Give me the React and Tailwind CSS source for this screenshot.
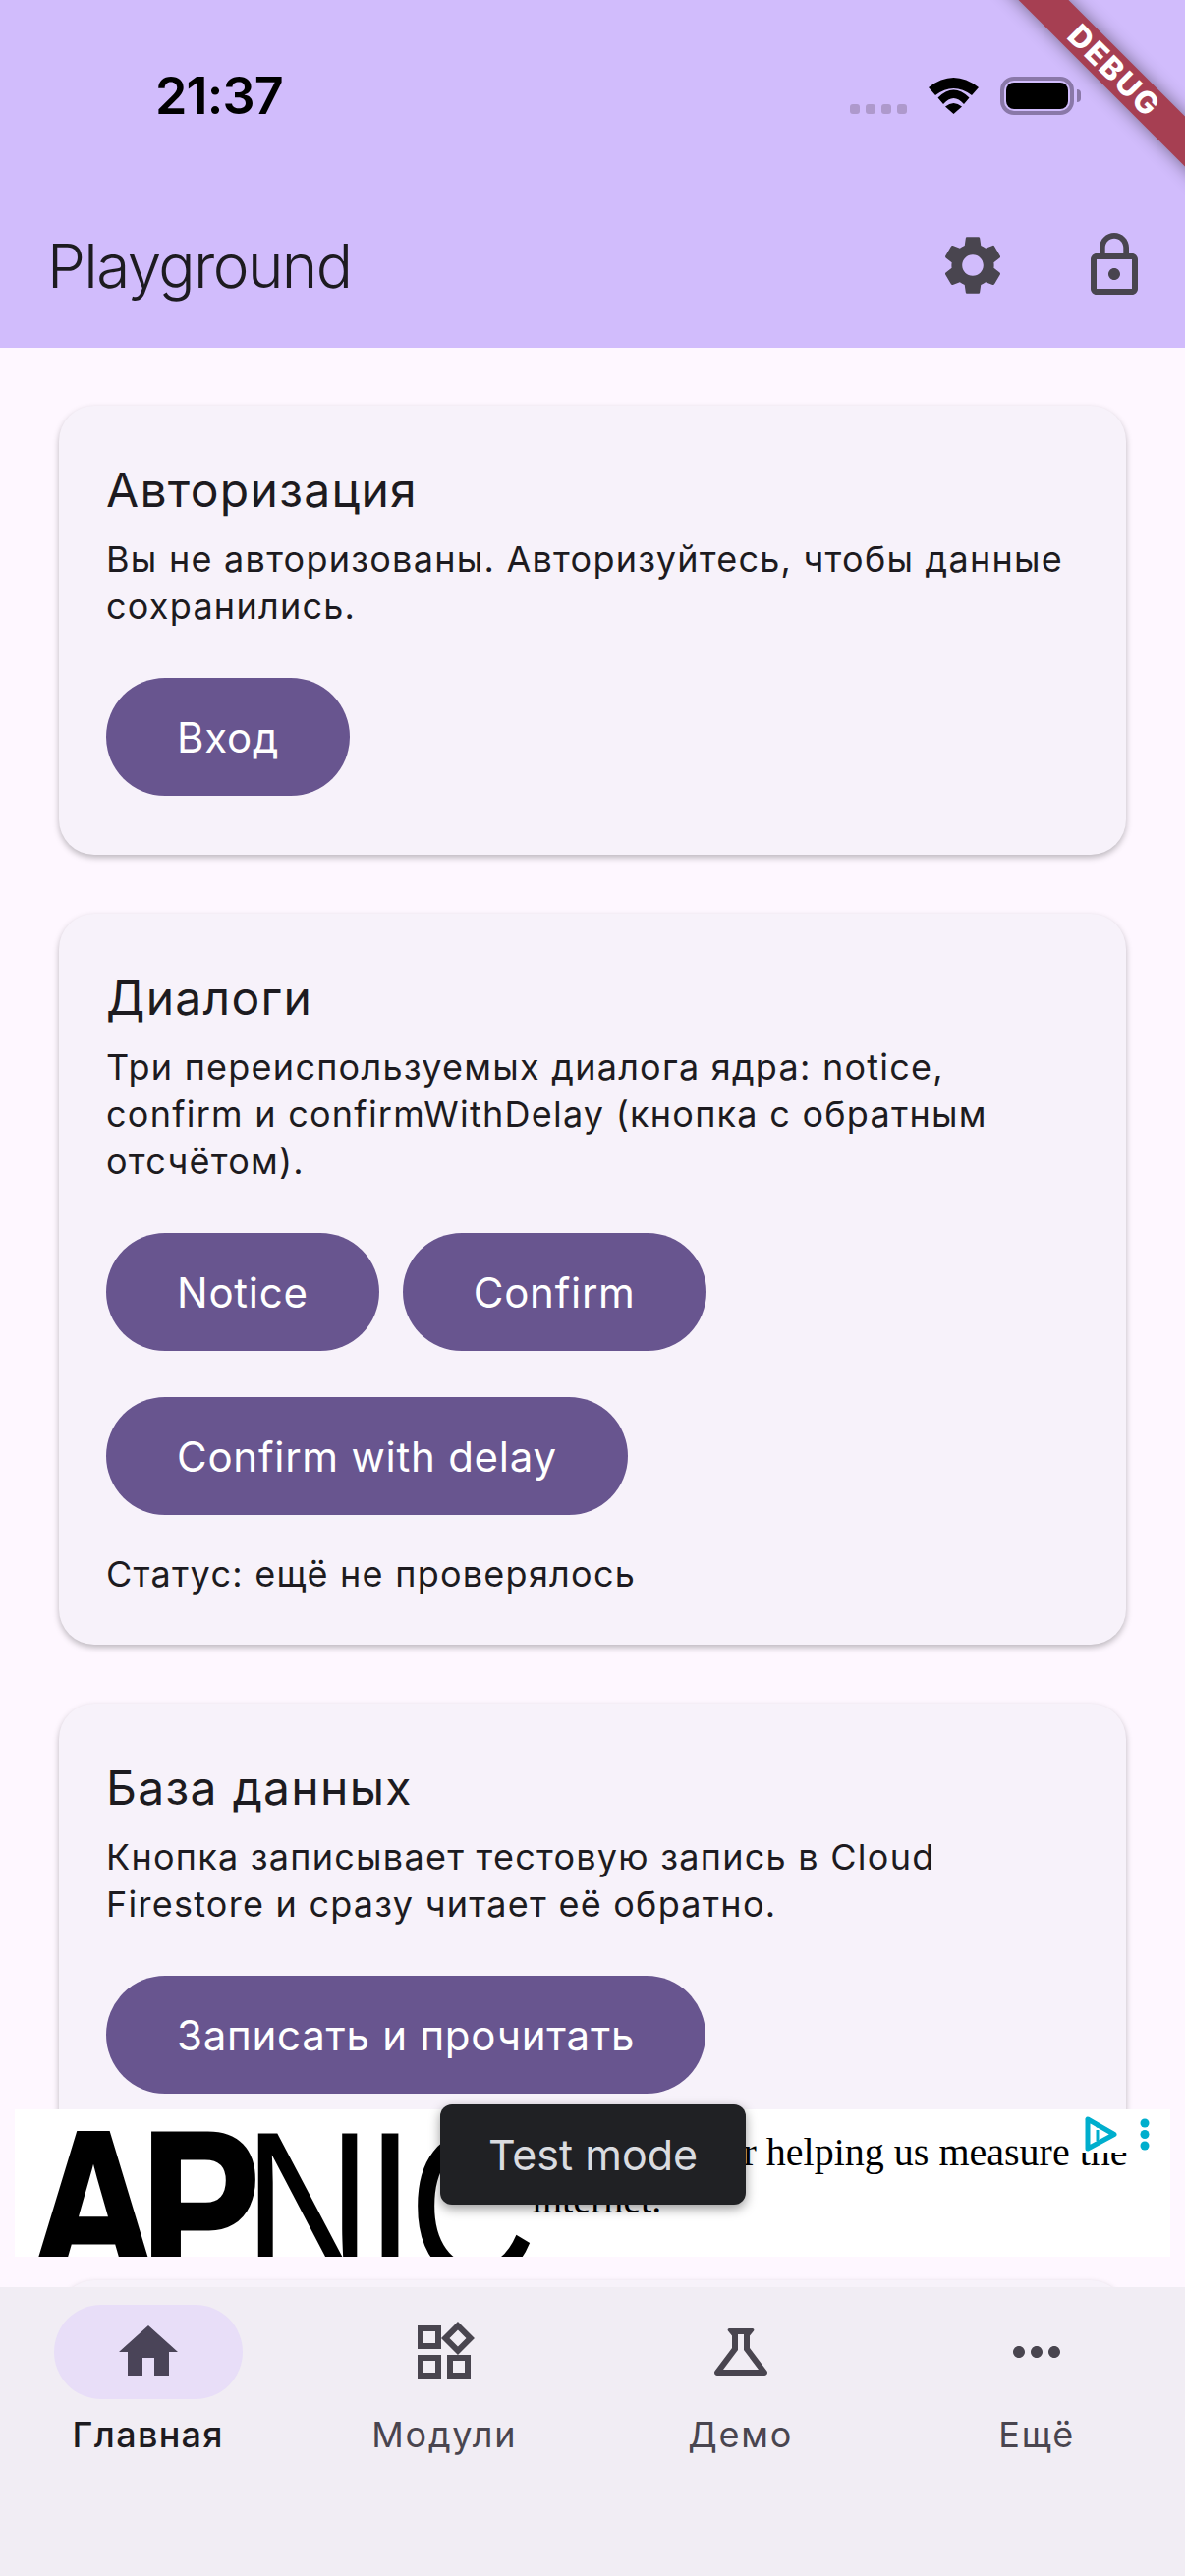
const sans = { fontFamily: 'Inter, "Noto Sans", sans-serif' };

const Icon = ({ d, className = '' }) => (
  <svg viewBox="0 0 24 24" className={`w-[72px] h-[72px] ${className}`} fill="currentColor">
    <path d={d} />
  </svg>
);

const icons = {
  settings:
    'M19.14 12.94c.04-.3.06-.61.06-.94 0-.32-.02-.64-.07-.94l2.03-1.58a.49.49 0 0 0 .12-.61l-1.92-3.32a.488.488 0 0 0-.59-.22l-2.39.96c-.5-.38-1.03-.7-1.62-.94l-.36-2.54a.484.484 0 0 0-.48-.41h-3.84c-.24 0-.43.17-.47.41l-.36 2.54c-.59.24-1.13.57-1.62.94l-2.39-.96c-.22-.08-.47 0-.59.22L2.74 8.87c-.12.21-.08.47.12.61l2.03 1.58c-.05.3-.09.63-.09.94s.02.64.07.94l-2.03 1.58a.49.49 0 0 0-.12.61l1.92 3.32c.12.22.37.29.59.22l2.39-.96c.5.38 1.03.7 1.62.94l.36 2.54c.05.24.24.41.48.41h3.84c.24 0 .44-.17.47-.41l.36-2.54c.59-.24 1.13-.56 1.62-.94l2.39.96c.22.08.47 0 .59-.22l1.92-3.32c.12-.22.07-.47-.12-.61l-2.01-1.58zM12 15.6c-1.98 0-3.6-1.62-3.6-3.6s1.62-3.6 3.6-3.6 3.6 1.62 3.6 3.6-1.62 3.6-3.6 3.6z',
  lock:
    'M12 17c1.1 0 2-.9 2-2s-.9-2-2-2-2 .9-2 2 .9 2 2 2zm6-9h-1V6c0-2.76-2.24-5-5-5S7 3.24 7 6v2H6c-1.1 0-2 .9-2 2v10c0 1.1.9 2 2 2h12c1.1 0 2-.9 2-2V10c0-1.1-.9-2-2-2zM8.9 6c0-1.71 1.39-3.1 3.1-3.1s3.1 1.39 3.1 3.1v2H8.9V6zM18 20H6V10h12v10z',
  home: 'M10 20v-6h4v6h5v-8h3L12 3 2 12h3v8z',
  widgets:
    'M16.66 4.52l2.83 2.83-2.83 2.83-2.83-2.83 2.83-2.83M9 5v4H5V5h4m10 10v4h-4v-4h4M9 15v4H5v-4h4m7.66-13.31L11 7.34 16.66 13l5.66-5.66-5.66-5.65zM11 3H3v8h8V3zm10 10h-8v8h8v-8zm-10 0H3v8h8v-8z',
  science:
    'M13 11.33L18 18H6l5-6.67V6h2M15.96 4H8.04C7.62 4 7.39 4.48 7.65 4.81L9 6.5v4.17L3.2 18.4C2.71 19.06 3.18 20 4 20h16c.82 0 1.29-.94.8-1.6L15 10.67V6.5l1.35-1.69C16.61 4.48 16.38 4 15.96 4z',
  more:
    'M6 10c-1.1 0-2 .9-2 2s.9 2 2 2 2-.9 2-2-.9-2-2-2zm12 0c-1.1 0-2 .9-2 2s.9 2 2 2 2-.9 2-2-.9-2-2-2zm-6 0c-1.1 0-2 .9-2 2s.9 2 2 2 2-.9 2-2-.9-2-2-2z',
};

const StatusBar = () => (
  <div className="h-[186px] pt-[78px] pl-[158px] pr-[106px]">
    <div className="flex items-center justify-between h-[39px]">
      <span className="text-[52px] leading-[39px] font-semibold text-black tracking-[-0.8px]">21:37</span>
      <div className="flex items-center">
        <div className="flex gap-[6px] self-end mb-[1px]">
          {[0, 1, 2, 3].map((i) => (
            <span key={i} className="w-[10px] h-[10px] rounded-[3px] bg-[#AE99CC]" />
          ))}
        </div>
        <svg viewBox="0 0 51 37" className="w-[51px] h-[37px] ml-[22px]" fill="#000">
          <path d="M0 10Q25.5-10 51 10L44 18Q25.5 4 7 18Z" />
          <path d="M9.5 20.5Q25.5 4.5 41.5 20.5L36 27Q25.5 15 15 27Z" />
          <path d="M17 29.5Q25.5 22.5 34 29.5L25.5 37Z" />
        </svg>
        <div className="w-[75px] h-[39px] ml-[22px] border-[4px] border-[#8A78A8] rounded-[14px] p-[2px]">
          <div className="w-full h-full bg-black rounded-[8px]" />
        </div>
        <div className="w-[4px] h-[13px] ml-[3px] bg-[#8A78A8] rounded-r-[4px]" />
      </div>
    </div>
  </div>
);

const Card = ({ title, text, children, className = 'pb-[60px]' }) => (
  <section className={`shrink-0 bg-[#F7F2FA] rounded-[36px] shadow-[0_3px_6px_rgba(0,0,0,0.26)] px-[48px] pt-[50px] ${className}`}>
    <h2 className="text-[48px] leading-[72px] font-normal text-[#1D1B20] tracking-[1.3px]">{title}</h2>
    <p className="mt-[10px] text-[36px] leading-[48px] font-normal text-[#1D1B20] tracking-[1.25px]">{text}</p>
    {children}
  </section>
);

const Btn = ({ children }) => (
  <button className="h-[120px] px-[72px] rounded-full bg-[#68558F] text-white text-[42px] font-normal tracking-[0.75px] whitespace-nowrap">
    {children}
  </button>
);

const NavItem = ({ icon, label, active }) => (
  <div className="flex flex-col items-center">
    <div className={`w-[192px] h-[96px] rounded-full flex items-center justify-center ${active ? 'bg-[#E8DEF8]' : ''}`}>
      <Icon d={icons[icon]} className={active ? 'text-[#4A4458]' : 'text-[#49454F]'} />
    </div>
    <span className={`mt-[12px] text-[36px] leading-[48px] ${active ? 'font-medium tracking-[1.3px] text-[#1D1B20]' : 'font-normal tracking-[1.8px] text-[#49454F]'}`}>
      {label}
    </span>
  </div>
);

const AdBanner = () => (
  <div className="absolute left-[15px] top-[2147px] w-[1176px] h-[150px] bg-white overflow-hidden">
    <div
      className="flex items-start text-black text-[180px] leading-[180px] origin-top scale-y-[1.2] pl-[15px] -mt-[9px]"
      style={{ fontFamily: '"Liberation Sans", sans-serif' }}
    >
      <span className="font-bold tracking-[-16px] [-webkit-text-stroke:4px_#000]">AP</span>
      <span className="tracking-[-6px]">NIC</span>
    </div>
    <p
      className="absolute left-[526px] top-[20px] w-[640px] text-[40px] leading-[48px] text-black"
      style={{ fontFamily: '"Liberation Serif", serif' }}
    >
      Thank you for helping us measure the internet.
    </p>
    <div className="absolute right-0 top-0 w-[93px] h-[44px] bg-white">
      <svg viewBox="0 0 93 44" className="w-[93px] h-[44px]" fill="none">
        <path d="M9 11V40L36 25.5L9 10" stroke="#00AECD" strokeWidth="5" strokeLinejoin="round" strokeLinecap="round" />
        <path d="M19 21V32" stroke="#00AECD" strokeWidth="3" />
        <circle cx="19" cy="17" r="1.8" fill="#00AECD" />
        <circle cx="67" cy="14" r="4.5" fill="#00AECD" />
        <circle cx="67" cy="25.5" r="4.5" fill="#00AECD" />
        <circle cx="67" cy="37" r="4.5" fill="#00AECD" />
      </svg>
    </div>
  </div>
);

export default function App() {
  return (
    <div className="relative w-[1206px] h-[2622px] flex flex-col overflow-hidden bg-[#FEF7FF]" style={sans}>
      <header className="h-[354px] shrink-0 bg-[#D1BCFC]">
        <StatusBar />
        <div className="h-[168px] flex items-center pl-[48px] text-[#49454F]">
          <h1 className="flex-1 text-[62px] text-[#1D1B20] font-light tracking-[-1.6px]">Playground</h1>
          <div className="w-[144px] h-[144px] flex items-center justify-center">
            <Icon d={icons.settings} />
          </div>
          <div className="w-[144px] h-[144px] flex items-center justify-center">
            <Icon d={icons.lock} />
          </div>
        </div>
      </header>

      <main className="flex-1 min-h-0 overflow-hidden px-[60px] pt-[59px] flex flex-col gap-[60px]">
        <Card title="Авторизация" text="Вы не авторизованы. Авторизуйтесь, чтобы данные сохранились.">
          <div className="mt-[49px]">
            <Btn>Вход</Btn>
          </div>
        </Card>
        <Card
          title="Диалоги"
          text="Три переиспользуемых диалога ядра: notice, confirm и confirmWithDelay (кнопка с обратным отсчётом)."
          className="pb-[48px]"
        >
          <div className="mt-[49px] flex gap-[24px]">
            <Btn>Notice</Btn>
            <Btn>Confirm</Btn>
          </div>
          <div className="mt-[47px]">
            <Btn>Confirm with delay</Btn>
          </div>
          <p className="mt-[36px] text-[36px] leading-[48px] font-normal text-[#1D1B20] tracking-[1.25px]">Статус: ещё не проверялось</p>
        </Card>
        <Card
          title="База данных"
          text="Кнопка записывает тестовую запись в Cloud Firestore и сразу читает её обратно."
          className="pb-[130px]"
        >
          <div className="mt-[49px]">
            <Btn>Записать и прочитать</Btn>
          </div>
        </Card>
        <div className="h-[200px] shrink-0 bg-[#F7F2FA] rounded-[36px] shadow-[0_3px_6px_rgba(0,0,0,0.26)]" />
      </main>

      <nav className="h-[294px] shrink-0 bg-[#F1EDF4] grid grid-cols-4 pt-[18px] items-start z-10">
        <NavItem icon="home" label="Главная" active />
        <NavItem icon="widgets" label="Модули" />
        <NavItem icon="science" label="Демо" />
        <NavItem icon="more" label="Ещё" />
      </nav>

      <AdBanner />

      {/* Test mode tooltip over the ad */}
      <div className="absolute left-[448px] top-[2142px] w-[311px] h-[102px] rounded-[12px] bg-[#202124] shadow-[0_4px_12px_rgba(0,0,0,0.4)] flex items-center justify-center text-[#DADCE0] text-[43px]">
        Test mode
      </div>

      {/* debug ribbon */}
      <div className="absolute inset-0 overflow-hidden pointer-events-none">
        <div className="absolute left-[934px] top-[54px] w-[400px] h-[36px] rotate-45 bg-[#A63F52] shadow-[0_0_18px_rgba(0,0,0,0.45)] flex items-center justify-center text-white text-[31px] font-extrabold tracking-[2px]">
          DEBUG
        </div>
      </div>
    </div>
  );
}
